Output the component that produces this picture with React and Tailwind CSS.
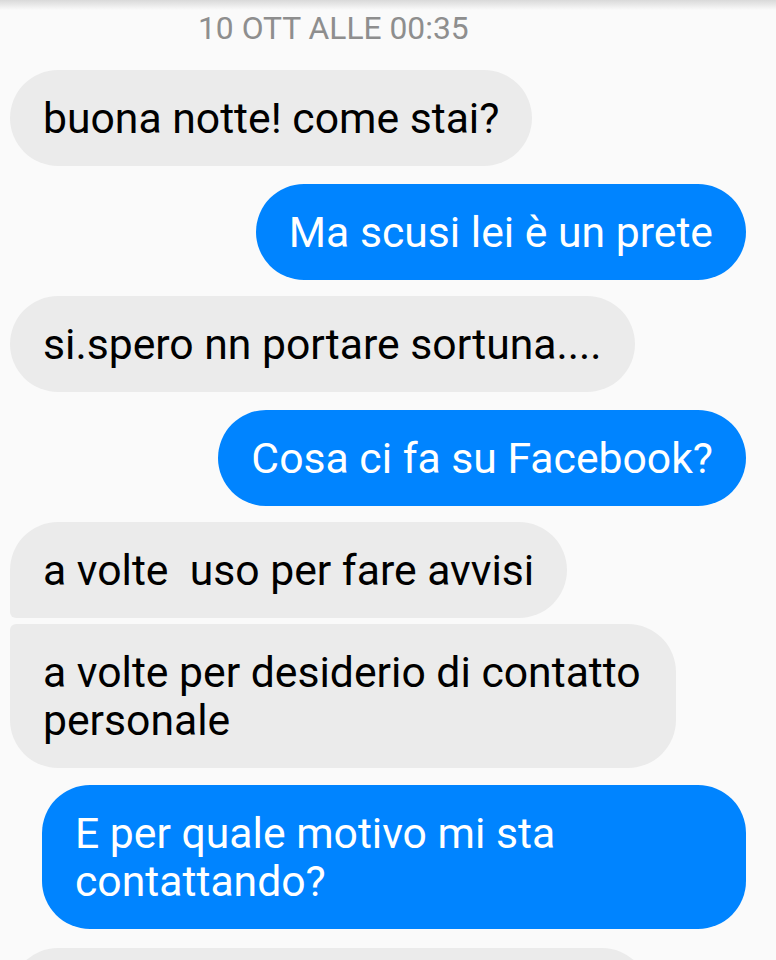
const messages = [
  { id: 1, mine: false, text: "buona notte! come stai?", mt: "mt-0", shape: "rounded-[48px]" },
  { id: 2, mine: true, text: "Ma scusi lei è un prete", mt: "mt-[18px]", shape: "rounded-[48px]" },
  { id: 3, mine: false, text: "si.spero nn portare sortuna....", mt: "mt-[16px]", shape: "rounded-[48px]" },
  { id: 4, mine: true, text: "Cosa ci fa su Facebook?", mt: "mt-[18px]", shape: "rounded-[48px]" },
  { id: 5, mine: false, text: "a volte  uso per fare avvisi", mt: "mt-[16px]", shape: "rounded-[48px] rounded-bl-[6px]" },
  {
    id: 6,
    mine: false,
    text: "a volte per desiderio di contatto personale",
    mt: "mt-[6px]",
    shape: "rounded-[48px] rounded-tl-[6px] max-w-[666px]",
  },
  {
    id: 7,
    mine: true,
    text: "E per quale motivo mi sta contattando?",
    mt: "mt-[17px]",
    shape: "rounded-[48px] w-[704px]",
  },
];

const Bubble = ({ msg }) => {
  const colors = msg.mine ? "bg-[#0084ff] text-white" : "bg-[#ebebeb] text-black";
  return (
    <div className={`flex ${msg.mine ? "justify-end" : "justify-start"} ${msg.mt}`}>
      <div className={`${colors} ${msg.shape} px-[33px] py-6`}>
        <p className="text-[42.7px] leading-[48px] whitespace-pre-wrap">{msg.text}</p>
      </div>
    </div>
  );
};

export default function App() {
  return (
    <div
      className="relative w-[776px] h-[960px] overflow-hidden bg-[#fafafa]"
      style={{ fontFamily: "Roboto, 'Noto Sans', sans-serif" }}
    >
      {/* shadow under the toolbar */}
      <div className="absolute top-0 left-0 right-0 h-[10px] bg-gradient-to-b from-[#d9d9d9] to-[#fafafa]" />

      {/* timestamp */}
      <div className="h-[70px] flex items-center pl-[198px] pb-[12px]">
        <span className="text-[31.8px] leading-none text-[#8e8e8e]">10 OTT ALLE 00:35</span>
      </div>

      {/* thread */}
      <div className="flex flex-col pl-[10px] pr-[30px]">
        {messages.map((m) => (
          <Bubble key={m.id} msg={m} />
        ))}
        {/* next bubble, cut off by the screen edge */}
        <div className="mt-[19px] flex">
          <div className="w-[640px] h-[96px] rounded-[48px] bg-[#ebebeb]" />
        </div>
      </div>
    </div>
  );
}
